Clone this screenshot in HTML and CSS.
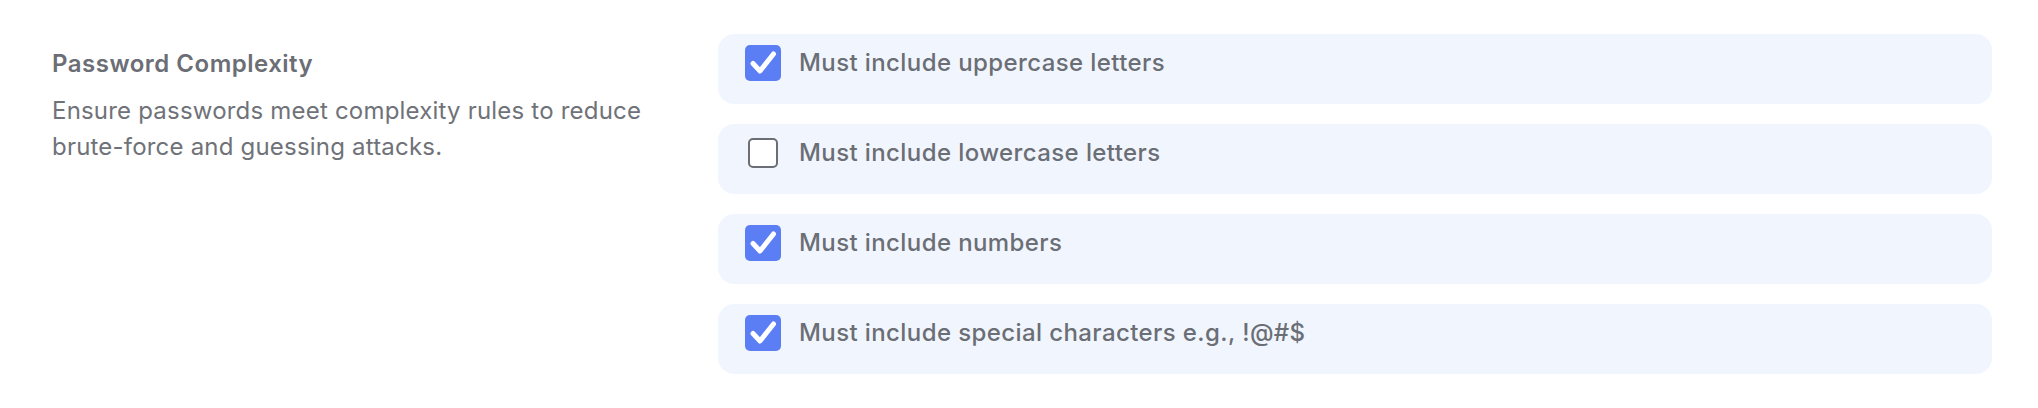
FILE: index.html
```html
<!DOCTYPE html>
<html lang="en">
<head>
<meta charset="utf-8">
<title>Password Complexity</title>
<link rel="stylesheet" href="styles.css">
</head>
<body>
<section class="setting">
  <div class="info">
    <h3 class="title">Password Complexity</h3>
    <p class="desc">Ensure passwords meet complexity rules to reduce brute-force and guessing attacks.</p>
  </div>
  <div class="options">
    <label class="option">
      <span class="box checked"><svg viewBox="0 0 36 36" width="36" height="36"><path d="M8 18.5 L15 26 L28.5 9" fill="none" stroke="#fff" stroke-width="5" stroke-linecap="round" stroke-linejoin="round"/></svg></span>
      <span class="label">Must include uppercase letters</span>
    </label>
    <label class="option">
      <span class="box"><span class="empty"></span></span>
      <span class="label">Must include lowercase letters</span>
    </label>
    <label class="option">
      <span class="box checked"><svg viewBox="0 0 36 36" width="36" height="36"><path d="M8 18.5 L15 26 L28.5 9" fill="none" stroke="#fff" stroke-width="5" stroke-linecap="round" stroke-linejoin="round"/></svg></span>
      <span class="label">Must include numbers</span>
    </label>
    <label class="option">
      <span class="box checked"><svg viewBox="0 0 36 36" width="36" height="36"><path d="M8 18.5 L15 26 L28.5 9" fill="none" stroke="#fff" stroke-width="5" stroke-linecap="round" stroke-linejoin="round"/></svg></span>
      <span class="label">Must include special characters e.g., !@#$</span>
    </label>
  </div>
</section>
</body>
</html>
```

FILE: styles.css
```css
html, body {
  margin: 0;
  padding: 0;
  background: #ffffff;
}

body {
  font-family: Inter, Lato, "Noto Sans", sans-serif;
  color: #6b6e75;
}

.setting {
  display: flex;
  padding: 34px 46px 34px 52px;
}

.info {
  width: 666px;
  flex: none;
  padding-top: 14px;
}

.title {
  margin: 0;
  font-size: 24px;
  font-weight: 600;
  letter-spacing: 0.5px;
  line-height: 32px;
  color: #6b6e75;
}

.desc {
  margin: 13px 0 0;
  width: 610px;
  font-size: 24px;
  font-weight: 400;
  letter-spacing: 0.2px;
  line-height: 36px;
  color: #6f7278;
}

.options {
  flex: 1;
  display: flex;
  flex-direction: column;
  gap: 20px;
}

.option {
  display: flex;
  align-items: flex-start;
  gap: 18px;
  height: 70px;
  box-sizing: border-box;
  padding: 11px 27px 0;
  background: #f1f6fe;
  border-radius: 16px;
}

.box {
  width: 36px;
  height: 36px;
  flex: none;
  display: flex;
  align-items: center;
  justify-content: center;
  border-radius: 5px;
}

.box.checked {
  background: #5b7ef5;
}

.box svg {
  display: block;
}

.empty {
  width: 30px;
  height: 30px;
  box-sizing: border-box;
  border: 2px solid #6b6e75;
  border-radius: 5px;
  background: #ffffff;
}

.label {
  font-size: 24px;
  font-weight: 500;
  letter-spacing: 0.4px;
  line-height: 36px;
  color: #6b6e75;
}
```
